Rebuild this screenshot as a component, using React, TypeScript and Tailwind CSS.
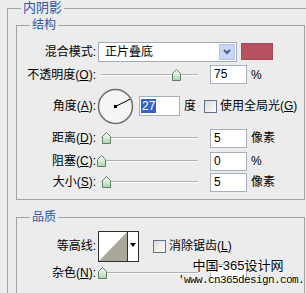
import React from "react";

const Thumb = () => (
  <svg width="9" height="12" viewBox="0 0 9 12">
    <defs>
      <linearGradient id="tg" x1="0" y1="0" x2="0" y2="1">
        <stop offset="0" stopColor="#ffffff" />
        <stop offset="1" stopColor="#a9d6ad" />
      </linearGradient>
    </defs>
    <path d="M0.5 4.5 L4.5 0.5 L8.5 4.5 V11.5 H0.5 Z" fill="url(#tg)" stroke="#5f7d67" />
  </svg>
);

const Slider = ({ at }: { at: number }) => (
  <div className="relative w-[100px] h-[12px] ml-[2px]">
    <div className="absolute left-[3px] right-0 top-[5px] h-[2px] border-t border-[#b0b0b0] bg-white" />
    <div className="absolute top-0" style={{ left: at - 98 - 4 }}>
      <Thumb />
    </div>
  </div>
);

const Field = ({ v, w = "w-[37px]" }: { v: string; w?: string }) => (
  <div className={`${w} h-[19px] ml-[12px] border border-[#a7b1bd] bg-white pl-[3px] text-[12px] leading-[17px]`}>{v}</div>
);

const Check = () => (
  <div className="w-[13px] h-[13px] border border-[#5d7390] bg-[linear-gradient(135deg,#dadad4,#ffffff)]" />
);

const Lbl = ({ children }: { children: React.ReactNode }) => (
  <div className="w-[79px] text-right text-[12px] whitespace-nowrap">{children}</div>
);

export default function App() {
  return (
    <div className="relative w-[306px] h-[293px] overflow-hidden bg-[#ececec] text-black font-['Liberation_Sans','Noto_Sans_CJK_SC',sans-serif]">
      <fieldset className="ml-[7px] w-[330px] border border-[#a3a3a3]">
        <legend className="ml-[13px] px-[2px] text-[13px] leading-[16px] text-[#2d56a6]">内阴影</legend>

        <fieldset className="mt-[2px] ml-[8px] w-[289px] border border-[#a3a3a3]">
          <legend className="ml-[13px] px-[2px] text-[12px] leading-[14px] text-[#2d56a6]">结构</legend>
          <div className="pt-[9px] pb-[6px]">
            <div className="flex items-center h-[21px]">
              <Lbl>混合模式:</Lbl>
              <div className="ml-[2px] flex w-[139px] h-[20px] border border-[#a4acb8] bg-white">
                <div className="flex-1 pl-[6px] text-[12px] leading-[18px]">正片叠底</div>
                <div className="w-[16px] m-[1px] flex items-center justify-center bg-[#c6d6f4] border border-[#b4c6ea]">
                  <svg width="8" height="6" viewBox="0 0 8 6">
                    <path d="M1 1 L4 4 L7 1" fill="none" stroke="#4a5d85" strokeWidth="2" />
                  </svg>
                </div>
              </div>
              <div className="ml-[4px] w-[32px] h-[17px] bg-[#b65260] border border-[#a84a57]" />
            </div>

            <div className="flex items-center h-[25px]">
              <Lbl>
                不透明度(<span className="underline">O</span>):
              </Lbl>
              <Slider at={176} />
              <Field v="75" />
              <span className="ml-[4px] text-[12px]">%</span>
            </div>

            <div className="flex items-center h-[38px]">
              <Lbl>
                角度(<span className="underline">A</span>):
              </Lbl>
              <svg className="ml-[1px]" width="37" height="37" viewBox="0 0 37 37">
                <circle cx="18.5" cy="18.5" r="17" fill="#f5f5f5" stroke="#6c6c6c" strokeWidth="1.5" />
                <line x1="18.5" y1="18.5" x2="33" y2="11.2" stroke="#000" strokeWidth="1" />
                <rect x="17" y="17" width="3" height="3" fill="#000" />
              </svg>
              <div className="ml-[5px] w-[41px] h-[20px] border border-[#a7b1bd] bg-white pl-[1px] pt-[1px] text-[12px] leading-[16px]">
                <span className="bg-[#3464c4] text-white px-[1px]">27</span>
              </div>
              <span className="ml-[4px] text-[12px]">度</span>
              <div className="ml-[8px]">
                <Check />
              </div>
              <span className="ml-[3px] text-[12px] whitespace-nowrap">
                使用全局光(<span className="underline">G</span>)
              </span>
            </div>

            <div className="flex items-center h-[26px]">
              <Lbl>
                距离(<span className="underline">D</span>):
              </Lbl>
              <Slider at={106} />
              <Field v="5" />
              <span className="ml-[4px] text-[12px]">像素</span>
            </div>

            <div className="flex items-center h-[20px]">
              <Lbl>
                阻塞(<span className="underline">C</span>):
              </Lbl>
              <Slider at={101} />
              <Field v="0" />
              <span className="ml-[4px] text-[12px]">%</span>
            </div>

            <div className="flex items-center h-[22px]">
              <Lbl>
                大小(<span className="underline">S</span>):
              </Lbl>
              <Slider at={106} />
              <Field v="5" />
              <span className="ml-[4px] text-[12px]">像素</span>
            </div>
          </div>
        </fieldset>

        <fieldset className="mt-[10px] ml-[8px] w-[289px] border border-[#a3a3a3]">
          <legend className="ml-[13px] px-[2px] text-[12px] leading-[14px] text-[#2d56a6]">品质</legend>
          <div className="pt-[5px] pb-[12px]">
            <div className="flex items-center h-[34px]">
              <Lbl>等高线:</Lbl>
              <div className="ml-[2px] flex w-[41px] h-[31px] border border-[#2e2e2e] bg-white">
                <svg width="28" height="29" viewBox="0 0 28 29">
                  <path d="M0 29 L28 0 L28 29 Z" fill="#aaa79b" />
                </svg>
                <div className="flex-1 border-l border-[#2e2e2e] flex justify-center pt-[11px]">
                  <svg width="6" height="4" viewBox="0 0 6 4">
                    <path d="M0 0 H6 L3 4 Z" fill="#000" />
                  </svg>
                </div>
              </div>
              <div className="ml-[14px]">
                <Check />
              </div>
              <span className="ml-[3px] text-[12px] whitespace-nowrap">
                消除锯齿(<span className="underline">L</span>)
              </span>
            </div>

            <div className="flex items-center h-[20px]">
              <Lbl>
                杂色(<span className="underline">N</span>):
              </Lbl>
              <Slider at={102} />
              <Field v="" />
            </div>
          </div>
        </fieldset>
        <div className="h-[20px]" />
      </fieldset>

      <div className="absolute left-[178px] top-[258px] flex flex-col items-center [text-shadow:0_0_2px_#fff,0_0_2px_#fff]">
        <span className="text-[13px] leading-[15px] mr-[6px]">中国-365设计网</span>
        <span className="font-['Liberation_Mono',monospace] text-[11px] leading-[14px] tracking-[-0.6px]">'www.cn365design.com.</span>
      </div>
    </div>
  );
}
